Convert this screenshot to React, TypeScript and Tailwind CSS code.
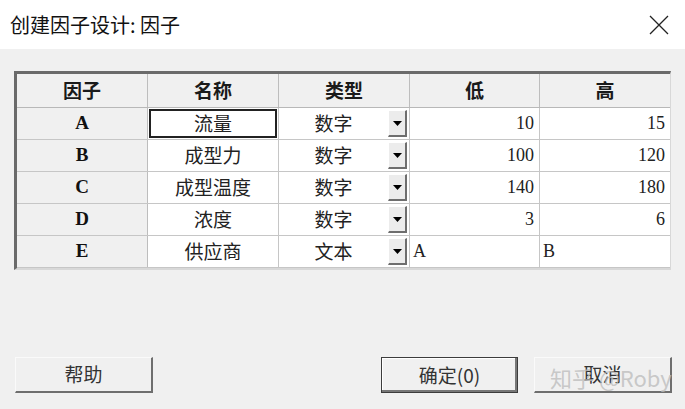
const cjk = "font-['Noto_Sans_CJK_SC',sans-serif]";
const serif = "font-['Liberation_Serif','Noto_Sans_CJK_SC',serif]";

type Factor = {
  key: string;
  name: string;
  kind: string;
  low: string;
  high: string;
  text?: boolean;
};

const factors: Factor[] = [
  { key: "A", name: "流量", kind: "数字", low: "10", high: "15" },
  { key: "B", name: "成型力", kind: "数字", low: "100", high: "120" },
  { key: "C", name: "成型温度", kind: "数字", low: "140", high: "180" },
  { key: "D", name: "浓度", kind: "数字", low: "3", high: "6" },
  { key: "E", name: "供应商", kind: "文本", low: "A", high: "B", text: true },
];

const headers = ["因子", "名称", "类型", "低", "高"];

function DropButton() {
  return (
    <div className="w-[19px] h-[27px] mr-[2px] flex items-center justify-center bg-[#ececec] border-t border-l border-t-white border-l-white border-r-2 border-b-2 border-r-[#6e6e6e] border-b-[#6e6e6e]">
      <svg width="9" height="5" viewBox="0 0 9 5">
        <polygon points="0,0 9,0 4.5,5" fill="#000" />
      </svg>
    </div>
  );
}

function FactorRow({ f, first }: { f: Factor; first: boolean }) {
  return (
    <div className="flex h-[32px] border-b border-[#c6c6c6]">
      <div className={`w-[131px] shrink-0 flex items-center justify-center bg-[#f0f0f0] border-r border-[#bdbdbd] ${serif} font-bold text-[19px] text-[#111]`}>
        {f.key}
      </div>
      <div className="w-[131px] shrink-0 border-r border-[#c6c6c6] bg-white p-[1px]">
        <div
          className={`h-full flex items-center justify-center ${cjk} text-[19px] text-[#222] ${
            first ? "border-2 border-[#222]" : ""
          }`}
        >
          {f.name}
        </div>
      </div>
      <div className="w-[131px] shrink-0 border-r border-[#c6c6c6] bg-white flex items-center">
        <div className={`flex-1 text-center ${cjk} text-[19px] text-[#222]`}>{f.kind}</div>
        <DropButton />
      </div>
      <div
        className={`w-[130px] shrink-0 border-r border-[#c6c6c6] bg-white flex items-center ${serif} text-[18px] text-[#222] ${
          f.text ? "justify-start pl-[3px]" : "justify-end pr-[5px]"
        }`}
      >
        {f.low}
      </div>
      <div
        className={`w-[130px] shrink-0 bg-white flex items-center ${serif} text-[18px] text-[#222] ${
          f.text ? "justify-start pl-[3px]" : "justify-end pr-[5px]"
        }`}
      >
        {f.high}
      </div>
    </div>
  );
}

function DialogButton({ label, primary }: { label: string; primary?: boolean }) {
  return (
    <button
      className={`h-[36px] flex items-center justify-center bg-[#f0f0f0] ${cjk} text-[19px] text-[#333] ${
        primary
          ? "w-[137px] border border-[#3c3c3c] shadow-[inset_-2px_-2px_0_#777,inset_1px_1px_0_#fff]"
          : "w-[138px] border-t border-l border-t-[#fafafa] border-l-[#fafafa] border-r-2 border-b-2 border-r-[#6e6e6e] border-b-[#6e6e6e]"
      }`}
    >
      {label}
    </button>
  );
}

export default function App() {
  return (
    <div className="w-[685px] h-[409px] bg-[#f0f0f0] flex flex-col overflow-hidden">
      <div className="h-[49px] bg-white flex items-center justify-between pl-[10px] pr-[16px]">
        <span className={`${cjk} text-[20px] text-[#111]`}>创建因子设计: 因子</span>
        <svg width="20" height="20" viewBox="0 0 20 20">
          <path d="M1 1 L19 19 M19 1 L1 19" stroke="#222" strokeWidth="1.3" fill="none" />
        </svg>
      </div>

      <div className="ml-[14px] mt-[22px] w-[657px] border-t-[3px] border-l-[3px] border-t-[#6a6a6a] border-l-[#6a6a6a] border-r border-b-2 border-r-[#d8d8d8] border-b-[#d8d8d8]">
        <div className="flex h-[34px] border-b border-[#b8b8b8] bg-[#f0f0f0]">
          {headers.map((h, i) => (
            <div
              key={h}
              className={`${i < 3 ? "w-[131px]" : "w-[130px]"} shrink-0 flex items-center justify-center ${cjk} font-bold text-[19px] text-[#1a1a1a] ${
                i < 4 ? "border-r border-[#bdbdbd]" : ""
              }`}
            >
              {h}
            </div>
          ))}
        </div>
        {factors.map((f, i) => (
          <FactorRow key={f.key} f={f} first={i === 0} />
        ))}
      </div>

      <div className="mt-auto mb-[16px] flex items-center pl-[15px] pr-[13px]">
        <DialogButton label="帮助" />
        <div className="flex-1" />
        <DialogButton label="确定(0)" primary />
        <div className="w-[16px]" />
        <div className="relative">
          <DialogButton label="取消" />
          <span className={`absolute left-[16px] top-[4px] ${cjk} text-[22px] text-[#bdbdbd]/80 whitespace-nowrap pointer-events-none`}>
            知乎 @Roby
          </span>
        </div>
      </div>
    </div>
  );
}
